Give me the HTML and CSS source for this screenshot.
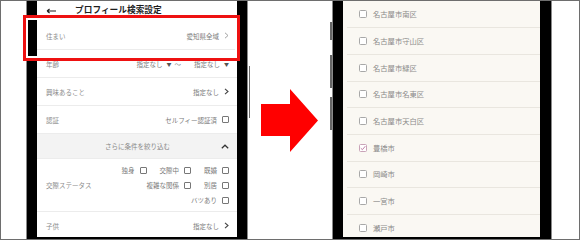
FILE: index.html
```html
<!DOCTYPE html>
<html lang="ja">
<head>
<meta charset="utf-8">
<title>プロフィール検索設定</title>
<link rel="stylesheet" href="styles.css">
</head>
<body>
<div class="canvas">
  <div class="phone phone-left">
    <div class="screen screen-left">
      <header class="hdr">
        <svg class="back" width="10" height="6" viewBox="0 0 10 6"><path d="M1 3H10M1 3L3.6 1M1 3L3.6 5" fill="none" stroke="#222" stroke-width="1.1"/></svg>
        <h1 class="title">プロフィール検索設定</h1>
      </header>
      <div class="row">
        <span class="lbl">住まい</span>
        <span class="val">愛知県全域<svg class="chev chev-light" width="5" height="7" viewBox="0 0 5 7"><path d="M1 0.8L4 3.5L1 6.2" fill="none" stroke="#999" stroke-width="0.9"/></svg></span>
      </div>
      <div class="row">
        <span class="lbl">年齢</span>
        <span class="val">指定なし<span class="tri">▼</span><span class="tilde">〜</span><span class="spacer"></span>指定なし<span class="tri">▼</span></span>
      </div>
      <div class="row">
        <span class="lbl">興味あること</span>
        <span class="val">指定なし<svg class="chev" width="5" height="7" viewBox="0 0 5 7"><path d="M1 0.8L4 3.5L1 6.2" fill="none" stroke="#444" stroke-width="1.1"/></svg></span>
      </div>
      <div class="row">
        <span class="lbl">認証</span>
        <span class="val">セルフィー認証済<span class="box"></span></span>
      </div>
      <div class="band">
        <span></span>
        <span class="band-text">さらに条件を絞り込む</span>
        <svg class="up" width="8" height="5" viewBox="0 0 8 5"><path d="M0.8 4.3L4 1.2L7.2 4.3" fill="none" stroke="#333" stroke-width="1.2"/></svg>
      </div>
      <div class="row status">
        <span class="lbl">交際ステータス</span>
        <div class="opts">
          <div class="opt-line"><span class="opt">独身<span class="box"></span></span><span class="opt">交際中<span class="box"></span></span><span class="opt">既婚<span class="box"></span></span></div>
          <div class="opt-line"><span class="opt">複雑な関係<span class="box"></span></span><span class="opt">別居<span class="box"></span></span></div>
          <div class="opt-line"><span class="opt">バツあり<span class="box"></span></span></div>
        </div>
      </div>
      <div class="row">
        <span class="lbl">子供</span>
        <span class="val">指定なし<svg class="chev" width="5" height="7" viewBox="0 0 5 7"><path d="M1 0.8L4 3.5L1 6.2" fill="none" stroke="#444" stroke-width="1.1"/></svg></span>
      </div>
    </div>
  </div>

  <div class="arrow">
    <svg width="57" height="63" viewBox="0 0 57 63"><polygon points="0,15 29,15 29,0 57,31.5 29,63 29,47 0,47" fill="#ff0000"/></svg>
  </div>

  <div class="phone phone-right">
    <div class="screen screen-right">
      <div class="item"><span class="cb"></span>名古屋市南区</div>
      <div class="item"><span class="cb"></span>名古屋市守山区</div>
      <div class="item"><span class="cb"></span>名古屋市緑区</div>
      <div class="item"><span class="cb"></span>名古屋市名東区</div>
      <div class="item"><span class="cb"></span>名古屋市天白区</div>
      <div class="item"><span class="cb cb-on"><svg width="6" height="6" viewBox="0 0 6 6"><path d="M0.8 3.2L2.4 4.7L5.3 1.2" fill="none" stroke="#b8739a" stroke-width="0.9"/></svg></span>豊橋市</div>
      <div class="item"><span class="cb"></span>岡崎市</div>
      <div class="item"><span class="cb"></span>一宮市</div>
      <div class="item"><span class="cb"></span>瀬戸市</div>
    </div>
  </div>

  <div class="highlight"></div>
</div>
</body>
</html>
```

FILE: styles.css
```css
* {
  box-sizing: border-box;
  margin: 0;
  padding: 0;
}

body {
  margin: 0;
  background: #fff;
  font-family: "Noto Sans CJK JP", "Noto Sans", sans-serif;
}

.canvas {
  position: relative;
  width: 580px;
  height: 240px;
  border: 1px solid #6e6e6e;
  display: flex;
  align-items: stretch;
  background: #fff;
  overflow: hidden;
}

/* phones */
.phone {
  position: relative;
  display: flex;
  background: #000;
  border-left: 1px solid #8a8a8a;
  border-right: 1px solid #8a8a8a;
  padding: 0 10px 2px 10px;
}

.phone-left {
  margin-left: 25px;
}

.phone-left::after {
  content: "";
  position: absolute;
  right: -3px;
  top: 65px;
  width: 1.5px;
  height: 52px;
  background: #6a6a6a;
}

.phone-right {
  padding-right: 11px;
}

.phone-right::before {
  content: "";
  position: absolute;
  left: -3px;
  top: 21px;
  width: 1.5px;
  height: 108px;
  background: linear-gradient(to bottom, #666 0 18px, transparent 18px 33px, #666 33px 66px, transparent 66px 75px, #666 75px 108px);
}

.screen {
  overflow: hidden;
}

.screen-left {
  width: 200px;
  background: #fff;
}

.screen-right {
  width: 197px;
  background: #faf8f3;
  padding-top: 0.6px;
}

/* left screen */
.hdr {
  height: 21px;
  display: flex;
  align-items: center;
  padding: 0 0 2px 9px;
}

.back {
  display: block;
}

.title {
  margin-left: 19px;
  font-size: 8.7px;
  font-weight: 700;
  color: #1e1e1e;
  line-height: 1;
}

.row {
  height: 28px;
  display: flex;
  justify-content: space-between;
  align-items: center;
  padding: 0 8px 0 9px;
  border-bottom: 1px solid #ececec;
  font-size: 6.5px;
}

.lbl {
  color: #8c8c8c;
}

.val {
  display: flex;
  align-items: center;
  color: #7a7a7a;
}

.chev {
  display: block;
  margin-left: 5px;
}

.tri {
  font-size: 5px;
  color: #555;
  margin-left: 4px;
}

.tilde {
  margin-left: 3px;
  color: #888;
}

.spacer {
  width: 13px;
}

.box {
  display: inline-block;
  width: 7px;
  height: 7px;
  border: 0.8px solid #777;
  border-radius: 1px;
  margin-left: 5px;
  background: #fff;
}

.band {
  height: 25px;
  display: grid;
  grid-template-columns: 1fr auto 1fr;
  align-items: center;
  background: #f3f3f3;
  border-bottom: 1px solid #ececec;
  padding: 0 8px 0 9px;
  font-size: 6.5px;
  color: #888;
}

.up {
  justify-self: end;
  display: block;
}

.status {
  height: 53px;
}

.opts {
  display: flex;
  flex-direction: column;
  align-items: flex-end;
}

.opt-line {
  display: flex;
  justify-content: flex-end;
  gap: 13px;
  height: 15px;
  align-items: center;
}

.opt {
  display: flex;
  align-items: center;
  color: #7a7a7a;
}

/* right screen */
.item {
  height: 26.67px;
  margin-left: 4px;
  display: flex;
  align-items: center;
  gap: 6px;
  padding-left: 12px;
  border-bottom: 1px solid #e9e6df;
  font-size: 7.3px;
  color: #8a8a8a;
}

.cb {
  display: flex;
  align-items: center;
  justify-content: center;
  width: 8px;
  height: 8px;
  border: 0.8px solid #a8a8a8;
  border-radius: 1.5px;
  background: #fff;
}

.cb-on {
  border-color: #c9a3b8;
}

.cb svg {
  display: block;
}

/* arrow */
.arrow {
  align-self: center;
  margin: 0 14px 0 13px;
  width: 57px;
  height: 63px;
}

.arrow svg {
  display: block;
}

/* highlight overlay */
.highlight {
  position: absolute;
  left: 22px;
  top: 14px;
  width: 217px;
  height: 46px;
  border: 3px solid #ee1111;
  box-shadow: inset 0 0 0 2px #fff;
}
```
